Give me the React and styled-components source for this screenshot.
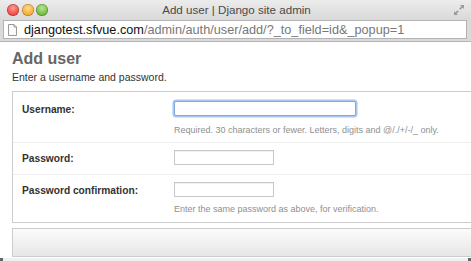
import React from 'react'
import styled, { createGlobalStyle } from 'styled-components'

const GlobalStyle = createGlobalStyle`
  html, body {
    margin: 0;
    padding: 0;
    background: #fff;
    overflow: hidden;
  }
  * { box-sizing: border-box; }
`

const Window = styled.div`
  width: 471px;
  height: 261px;
  overflow: hidden;
  display: flex;
  flex-direction: column;
  font-family: "Liberation Sans", Arial, sans-serif;
  background: #fff;
`

const TitleBar = styled.div`
  height: 19px;
  display: flex;
  align-items: center;
  padding-left: 7px;
  background: linear-gradient(#ececec, #dadada);
`

const Lights = styled.div`
  display: flex;
  gap: 2.5px;
`

const Light = styled.span`
  width: 12px;
  height: 12px;
  border-radius: 50%;
  background: radial-gradient(circle at 50% 35%, ${p => p.$hi} 0%, ${p => p.$c} 60%, ${p => p.$edge} 100%);
  box-shadow: inset 0 0 0 0.5px rgba(0,0,0,0.35);
`

const Title = styled.div`
  flex: 1;
  text-align: center;
  font-size: 11.6px;
  color: #4a4a4a;
  margin-left: -14px;
  margin-right: 14px;
`

const Resize = styled.svg`
  width: 12px;
  height: 12px;
  margin-right: 6px;
`

const Toolbar = styled.div`
  background: #dadada;
  padding: 1px 4px 2px 3px;
  border-bottom: 1px solid #b5b5b5;
`

const UrlField = styled.div`
  height: 19px;
  background: #fff;
  border: 1px solid #b3b3b3;
  display: flex;
  align-items: center;
  gap: 7px;
  padding-left: 4px;
  padding-top: 1px;
  font-size: 12.7px;
  white-space: nowrap;
`

const Host = styled.span`
  color: #111;
`

const Path = styled.span`
  color: #777;
`

const Content = styled.div`
  flex: 1;
  padding: 7px 0 0 12px;
  min-height: 0;
`

const Heading = styled.h1`
  margin: 0;
  font-size: 16px;
  font-weight: bold;
  color: #666;
  line-height: 20px;
`

const Intro = styled.p`
  margin: 1px 0 0;
  font-size: 10.5px;
  color: #333;
  line-height: 14px;
`

const Fieldset = styled.div`
  margin-top: 7px;
  width: 470px;
  border: 1px solid #ccc;
`

const Row = styled.div`
  display: flex;
  padding: ${p => p.$pad};
  border-top: ${p => (p.$first ? 'none' : '1px solid #eee')};
  height: ${p => p.$h}px;
`

const Label = styled.label`
  width: 161px;
  padding-left: 9px;
  padding-top: 2px;
  font-size: 10.2px;
  font-weight: bold;
  color: #333;
  line-height: 13px;
`

const Field = styled.div`
  display: flex;
  flex-direction: column;
`

const Input = styled.div`
  width: ${p => p.$w}px;
  height: 15px;
  background: #fff;
  border: 1px solid ${p => (p.$focus ? '#7ea9e2' : '#c8c8c8')};
  box-shadow: ${p => (p.$focus ? '0 0 0 1.5px #a8c8f0' : 'inset 0 1px 1px rgba(0,0,0,0.06)')};
  border-radius: ${p => (p.$focus ? '2px' : '0')};
`

const Help = styled.div`
  margin-top: ${p => p.$mt}px;
  font-size: 9px;
  color: #8f8f8f;
  line-height: 11px;
  white-space: nowrap;
`

const SubmitRow = styled.div`
  margin-top: 5px;
  width: 470px;
  height: 29px;
  border: 1px solid #ccc;
  background: linear-gradient(#fcfcfc, #e6e6e6);
`

const BottomEdge = styled.div`
  height: 3px;
  background: #f0f0f0;
  display: flex;
  justify-content: space-between;
`

const Corner = styled.span`
  width: 3px;
  height: 3px;
  background: #666;
`

export default function App() {
  return (
    <>
      <GlobalStyle />
      <Window>
        <TitleBar>
          <Lights>
            <Light $c="#f24e4a" $hi="#ff9c96" $edge="#c63a35" />
            <Light $c="#f6b03c" $hi="#ffd98c" $edge="#cf8a1e" />
            <Light $c="#76c043" $hi="#b6e58f" $edge="#4f9528" />
          </Lights>
          <Title>Add user | Django site admin</Title>
          <Resize viewBox="0 0 12 12">
            <path d="M7 1h4v4l-1.4-1.4-2.2 2.2-1.2-1.2 2.2-2.2z" fill="#9a9a9a" />
            <path d="M5 11H1V7l1.4 1.4 2.2-2.2 1.2 1.2-2.2 2.2z" fill="#9a9a9a" />
          </Resize>
        </TitleBar>
        <Toolbar>
          <UrlField>
            <svg width="9" height="12" viewBox="0 0 9 12">
              <path d="M0.5 0.5h5.5l2.5 2.5v8.5h-8z" fill="#fafafa" stroke="#999" />
              <path d="M6 0.5v2.5h2.5" fill="none" stroke="#999" />
            </svg>
            <span>
              <Host>djangotest.sfvue.com</Host>
              <Path>/admin/auth/user/add/?_to_field=id&amp;_popup=1</Path>
            </span>
          </UrlField>
        </Toolbar>
        <Content>
          <Heading>Add user</Heading>
          <Intro>Enter a username and password.</Intro>
          <Fieldset>
            <Row $first $pad="9px 0 0" $h={50}>
              <Label>Username:</Label>
              <Field>
                <Input $w={182} $focus />
                <Help $mt={9}>Required. 30 characters or fewer. Letters, digits and @/./+/-/_ only.</Help>
              </Field>
            </Row>
            <Row $pad="7px 0 0" $h={32}>
              <Label>Password:</Label>
              <Field>
                <Input $w={100} />
              </Field>
            </Row>
            <Row $pad="7px 0 0" $h={48}>
              <Label>Password confirmation:</Label>
              <Field>
                <Input $w={100} />
                <Help $mt={7}>Enter the same password as above, for verification.</Help>
              </Field>
            </Row>
          </Fieldset>
          <SubmitRow />
        </Content>
        <BottomEdge>
          <Corner />
          <Corner />
        </BottomEdge>
      </Window>
    </>
  )
}
